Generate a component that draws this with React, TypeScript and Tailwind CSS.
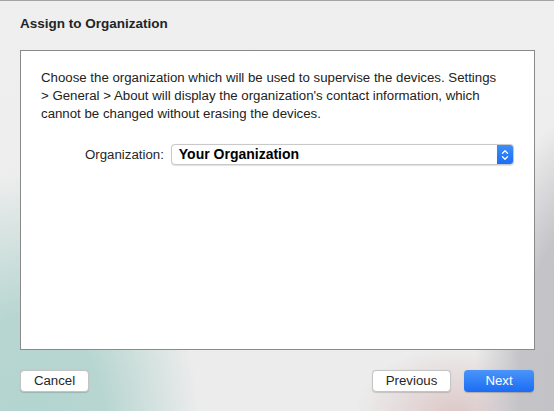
import React from "react";

export default function App() {
  return (
    <div
      className="relative w-[554px] h-[411px] overflow-hidden border-t border-[#a3a3a3] text-[13px] text-[#262626] bg-[radial-gradient(ellipse_170px_260px_at_30px_430px,#b2d5cf_0%,#b8d6d1_45%,rgba(188,215,210,0)_100%),radial-gradient(ellipse_110px_280px_at_585px_390px,#c2c1c5_0%,#c4c3c7_60%,rgba(196,195,199,0)_100%),radial-gradient(ellipse_100px_70px_at_455px_415px,#dcc7c7_0%,rgba(221,200,200,0)_100%),linear-gradient(#efefef,#ececec)]"
      style={{ fontFamily: '"Liberation Sans", Arial, sans-serif' }}
    >
      <div className="flex flex-col h-full px-[20px]">
        <div className="h-[49px] flex items-center pt-[10px] pb-[12px] font-bold text-[13.5px] text-[#242424]">
          Assign to Organization
        </div>
        <div className="w-[515px] h-[300px] bg-white border border-[#8a8a8a] flex flex-col pt-[18px] pl-[20px]">
          <p className="leading-[17.8px] text-[13.25px] text-[#222]">
            <span className="block">Choose the organization which will be used to supervise the devices. Settings</span>
            <span className="block">&gt; General &gt; About will display the organization's contact information, which</span>
            <span className="block">cannot be changed without erasing the devices.</span>
          </p>
          <div className="flex items-center mt-[22px] pl-[44px]">
            <span className="text-[13.25px] text-[#262626] mr-[7px]">Organization:</span>
            <div className="flex w-[343px] h-[21px] rounded-[4px] border border-[#c9c9c9] bg-white shadow-[0_0.5px_1px_rgba(0,0,0,0.12)] overflow-hidden">
              <span className="flex-1 flex items-center pl-[7px] font-bold text-[14px] text-black">Your Organization</span>
              <span className="w-[16px] h-full bg-[linear-gradient(#3d8ef8,#1c6ef6)] flex items-center justify-center">
                <svg width="8" height="12" viewBox="0 0 8 12" fill="none" stroke="white" strokeWidth="1.3" strokeLinecap="round" strokeLinejoin="round">
                  <path d="M1.5 4.2 L4 1.8 L6.5 4.2" />
                  <path d="M1.5 7.8 L4 10.2 L6.5 7.8" />
                </svg>
              </span>
            </div>
          </div>
        </div>
        <div className="flex items-center mt-[20px]">
          <button className="w-[69px] h-[22px] rounded-[4px] bg-white border border-[#c4c4c4] shadow-[0_0.5px_1px_rgba(0,0,0,0.15)] text-[13.25px] text-[#262626] flex items-center justify-center">
            Cancel
          </button>
          <div className="flex-1" />
          <button className="w-[79px] h-[22px] rounded-[4px] bg-white border border-[#c4c4c4] shadow-[0_0.5px_1px_rgba(0,0,0,0.15)] text-[13.25px] text-[#262626] flex items-center justify-center">
            Previous
          </button>
          <button className="ml-[13px] w-[70px] h-[22px] rounded-[4px] bg-[linear-gradient(#4a95f9,#1a6cf5)] shadow-[0_0.5px_1px_rgba(0,0,0,0.2)] text-[13.25px] text-white flex items-center justify-center">
            Next
          </button>
        </div>
      </div>
    </div>
  );
}
